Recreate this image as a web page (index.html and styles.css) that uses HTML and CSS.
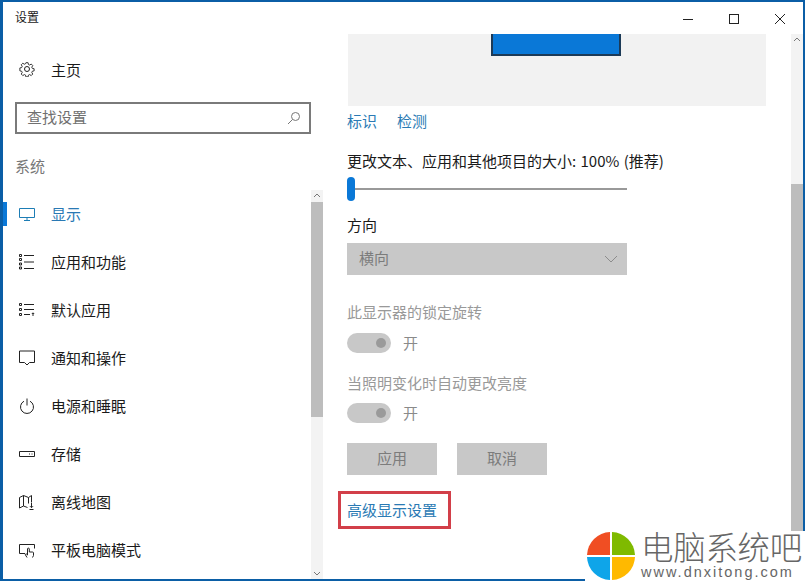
FILE: index.html
```html
<!DOCTYPE html>
<html lang="zh-CN">
<head>
<meta charset="utf-8">
<title>设置</title>
<link rel="stylesheet" href="styles.css">
</head>
<body>
<div class="window">
  <header class="titlebar">
    <span class="title">设置</span>
    <div class="controls">
      <svg class="ctl" viewBox="0 0 46 32"><path d="M18 18.500h10" /></svg>
      <svg class="ctl" viewBox="0 0 46 32"><rect x="18.500" y="13.500" width="9" height="9" /></svg>
      <svg class="ctl" viewBox="0 0 46 32"><path d="M18 13l10 10M28 13l-10 10" /></svg>
    </div>
  </header>
  <div class="body">
    <aside class="sidebar">
      <div class="home">
        <svg class="icon" viewBox="0 0 16 16"><circle cx="8" cy="8" r="2.500"/><path d="M6.800 1h2.400l.4 2 1.300.6 1.800-1.100 1.700 1.700-1.100 1.800.6 1.300 2 .4v2.400l-2 .4-.6 1.300 1.100 1.800-1.700 1.700-1.800-1.100-1.300.6-.4 2H6.800l-.4-2-1.300-.6-1.800 1.100-1.700-1.700 1.100-1.800-.6-1.300-2-.4V6.800l2-.4.6-1.300-1.100-1.800 1.700-1.700 1.800 1.100 1.300-.6z" transform="translate(.8 .8) scale(.9)"/></svg>
        <span>主页</span>
      </div>
      <div class="search">
        <span>查找设置</span>
        <svg class="search-icon" viewBox="0 0 14 14"><circle cx="8.500" cy="5.500" r="4"/><path d="M5.500 8.500L1 13"/></svg>
      </div>
      <div class="group">系统</div>
      <div class="navwrap">
        <nav class="nav">
          <div class="item active">
            <svg class="icon" viewBox="0 0 16 16"><path d="M.5 2.500h15v9H.5zM8 11.500v2.500M5 14.500h6"/></svg>
            <span>显示</span>
          </div>
          <div class="item">
            <svg class="icon" viewBox="0 0 16 16"><path d="M.5.500h2v2h-2zM.5 4.500h2v2h-2zM.5 9h2v2h-2zM.5 13h2v2h-2zM5 1.500h10M5 8h10M5 14.500h10"/></svg>
            <span>应用和功能</span>
          </div>
          <div class="item">
            <svg class="icon" viewBox="0 0 16 16"><path d="M.5 1.500h2v2h-2zM.5 6.500h2v2h-2zM.5 11.500h2v2h-2zM5 2.500h10M5 7.500h10M5 12.500h6M14 14v-3M12.800 12l1.200-1.200 1.200 1.200"/></svg>
            <span>默认应用</span>
          </div>
          <div class="item">
            <svg class="icon" viewBox="0 0 16 16"><path d="M.5 1h15v11.500h-5L8 15l-2.500-2.500h-5z"/></svg>
            <span>通知和操作</span>
          </div>
          <div class="item">
            <svg class="icon" viewBox="0 0 16 16"><path d="M5 3.200a6.500 6.500 0 1 0 6 0M8 .5v7"/></svg>
            <span>电源和睡眠</span>
          </div>
          <div class="item">
            <svg class="icon" viewBox="0 0 16 16"><path d="M.5 5.500h15v5H.5zM10 8h1M12.500 8h1"/></svg>
            <span>存储</span>
          </div>
          <div class="item">
            <svg class="icon" viewBox="0 0 16 16"><path d="M.5 3.500l4-2 5 2 3-2v7M.5 3.500v10.500l4-2 4 1.500M4.500 1.500v10.500M9.500 3.500v6M12.500 9v4.500M11 12.200l1.500 1.500 1.500-1.500M10.500 15.500h4"/></svg>
            <span>离线地图</span>
          </div>
          <div class="item">
            <svg class="icon" viewBox="0 0 16 16"><path d="M6 11.500H.5v-9h15v4M8 15.500l-1.800-3 1-.7 1.300 1.200V7a.9.900 0 0 1 1.800 0v3h3.200a1 1 0 0 1 1 1v2.500l-1 2"/></svg>
            <span>平板电脑模式</span>
          </div>
        </nav>
        <div class="scrollbar side-scroll">
          <svg class="arrow" viewBox="0 0 12 12"><path d="M3 7l3-3 3 3"/></svg>
          <div class="thumb side-thumb"></div>
          <div class="track-fill"></div>
          <svg class="arrow" viewBox="0 0 12 12"><path d="M3 5l3 3 3-3"/></svg>
        </div>
      </div>
    </aside>
    <main class="main">
      <div class="content">
        <div class="preview"><div class="monitor"></div></div>
        <div class="links"><a>标识</a><a>检测</a></div>
        <p class="label scale">更改文本、应用和其他项目的大小: 100% (推荐)</p>
        <div class="slider"><div class="knob"></div><div class="rail"></div></div>
        <p class="label dir">方向</p>
        <div class="select">
          <span>横向</span>
          <svg class="chev" viewBox="0 0 14 8"><path d="M1 1l6 6 6-6"/></svg>
        </div>
        <p class="label muted first">此显示器的锁定旋转</p>
        <div class="toggle-row"><div class="toggle"><div class="dot"></div></div><span>开</span></div>
        <p class="label muted second">当照明变化时自动更改亮度</p>
        <div class="toggle-row"><div class="toggle"><div class="dot"></div></div><span>开</span></div>
        <div class="buttons"><div class="btn">应用</div><div class="btn">取消</div></div>
        <div class="advanced"><a>高级显示设置</a></div>
      </div>
      <div class="scrollbar main-scroll">
        <svg class="arrow" viewBox="0 0 12 12"><path d="M3 7l3-3 3 3"/></svg>
        <div class="track-top"></div>
        <div class="thumb main-thumb"></div>
      </div>
    </main>
  </div>
</div>
<div class="watermark">
  <svg class="logo" viewBox="0 0 50 50">
    <path fill="#f04e23" d="M24 1A24 24 0 0 0 1 24h23z"/>
    <path fill="#7fba00" d="M26 1a24 24 0 0 1 23 23H26z"/>
    <path fill="#0ea5e9" d="M1 26a24 24 0 0 0 23 23V26z"/>
    <path fill="#ffb900" d="M26 26v23a24 24 0 0 0 23-23z"/>
  </svg>
  <div class="brand">
    <div class="brand-cn">电脑系统吧</div>
    <div class="brand-en">www.dnxitong.com</div>
  </div>
</div>
</body>
</html>
```
FILE: styles.css
```css
* { box-sizing: border-box; }
html, body { margin: 0; padding: 0; }
body {
  width: 805px;
  height: 581px;
  overflow: hidden;
  position: relative;
  background: #fff;
  font-family: "Noto Sans CJK SC", "Microsoft YaHei", sans-serif;
  font-size: 15px;
  color: #1a1a1a;
}
svg { display: block; fill: none; stroke: currentColor; stroke-width: 1; }
p { margin: 0; }

.window {
  width: 805px;
  height: 581px;
  border-style: solid;
  border-color: #0b5ea6;
  border-width: 2px 2px 2px 3px;
  display: flex;
  flex-direction: column;
  background: #fff;
}
.titlebar {
  height: 32px;
  flex: none;
  display: flex;
  align-items: center;
  justify-content: space-between;
  padding-left: 12px;
}
.title { font-size: 12px; line-height: 16px; margin-top: -3px; }
.controls { display: flex; }
.ctl { width: 46px; height: 32px; color: #222; margin-top: -2px; }

.body { flex: 1; display: flex; min-height: 0; }

.sidebar { width: 320px; flex: none; display: flex; flex-direction: column; }
.home {
  height: 24px;
  margin-top: 23px;
  padding-left: 16px;
  display: flex;
  align-items: center;
  gap: 16px;
}
.icon { width: 16px; height: 16px; flex: none; color: #222; }
.search {
  width: 296px;
  height: 32px;
  margin: 21px 0 0 12px;
  border: 2px solid #7a7a7a;
  display: flex;
  align-items: center;
  justify-content: space-between;
  padding: 0 8px 4px 10px;
  color: #707070;
}
.search-icon { width: 14px; height: 14px; color: #777; margin-top: 4px; }
.group { margin: 20px 0 0 12px; font-size: 15px; line-height: 24px; color: #777; }

.navwrap { flex: 1; display: flex; min-height: 0; margin-top: 12px; }
.nav { flex: 1; }
.item {
  height: 48px;
  display: flex;
  align-items: center;
  gap: 16px;
  padding-left: 16px;
  position: relative;
}
.item span { margin-top: -2px; }
.item.active { color: #2a79b4; }
.item.active .icon { color: #1d7db5; }
.item.active::before {
  content: "";
  position: absolute;
  left: 0;
  top: 12px;
  width: 4px;
  height: 24px;
  background: #0a78d7;
}
.scrollbar { width: 12px; flex: none; display: flex; flex-direction: column; background: #f3f3f3; }
.arrow { width: 12px; height: 12px; flex: none; color: #777; }
.thumb { background: #bdbdbd; flex: none; }
.side-thumb { height: 215px; }
.track-fill { flex: 1; }

.main { flex: 1; display: flex; min-width: 0; }
.content { flex: 1; padding-left: 24px; min-width: 0; }
.preview {
  width: 418px;
  height: 72px;
  margin-left: 1px;
  background: #f2f2f2;
  display: flex;
  justify-content: center;
  align-items: flex-start;
}
.monitor {
  width: 130px;
  height: 22px;
  margin-right: 2px;
  background: #0a78d7;
  border: 2px solid #1c3a57;
  border-top: 0;
}
.links { display: flex; gap: 20px; margin-top: 3px; line-height: 24px; }
.links a { color: #2a7ab4; }
.label { line-height: 24px; }
.scale { margin-top: 16px; word-spacing: 1px; }
.slider { width: 280px; height: 24px; margin-top: 4px; position: relative; display: flex; align-items: center; }
.rail { width: 100%; height: 2px; background: #999; }
.knob {
  position: absolute;
  left: 0;
  top: 0;
  width: 8px;
  height: 24px;
  border-radius: 4px;
  background: #0a78d7;
}
.dir { margin-top: 12px; }
.select {
  width: 280px;
  height: 32px;
  margin-top: 6px;
  background: #c8c8c8;
  display: flex;
  align-items: center;
  justify-content: space-between;
  padding: 0 9px 4px 12px;
  color: #7c7c7c;
}
.chev { width: 14px; height: 8px; color: #8c8c8c; margin-top: 4px; }
.muted { color: #999; }
.first { margin-top: 25px; }
.second { margin-top: 18px; }
.toggle-row { display: flex; align-items: center; gap: 12px; margin-top: 9px; height: 20px; color: #8a8a8a; }
.second + .toggle-row { margin-top: 8px; }
.toggle-row span { margin-top: -2px; }
.toggle {
  width: 44px;
  height: 20px;
  border-radius: 10px;
  background: #c8c8c8;
  display: flex;
  align-items: center;
  justify-content: flex-end;
  padding-right: 5px;
}
.dot { width: 10px; height: 10px; border-radius: 50%; background: #9a9a9a; }
.buttons { display: flex; gap: 20px; margin-top: 20px; }
.btn {
  width: 90px;
  height: 32px;
  padding-bottom: 4px;
  background: #c8c8c8;
  color: #7c7c7c;
  display: flex;
  align-items: center;
  justify-content: center;
}
.advanced {
  width: 113px;
  height: 38px;
  margin: 16px 0 0 -9px;
  padding: 0 0 1px 6px;
  border: 3px solid #d23f49;
  display: flex;
  align-items: center;
}
.advanced a { color: #2a7ab4; }
.main-scroll { height: 545px; }
.track-top { height: 138px; flex: none; }
.main-thumb { flex: 1; }

.watermark {
  position: absolute;
  right: 0;
  bottom: 0;
  width: 220px;
  height: 50px;
  background: #fff;
  display: flex;
  align-items: center;
  padding-left: 1px;
  gap: 5px;
}
.logo { width: 50px; height: 50px; stroke: none; flex: none; }
.brand { color: #666; }
.brand-cn { font-size: 32.500px; line-height: 32px; margin-top: -3px; letter-spacing: -.3px; font-weight: 300; }
.brand-en {
  font-family: "Liberation Sans", Arial, sans-serif;
  font-size: 14.500px;
  line-height: 14px;
  margin-top: 3px;
  letter-spacing: 2px;
  white-space: nowrap;
}
```
